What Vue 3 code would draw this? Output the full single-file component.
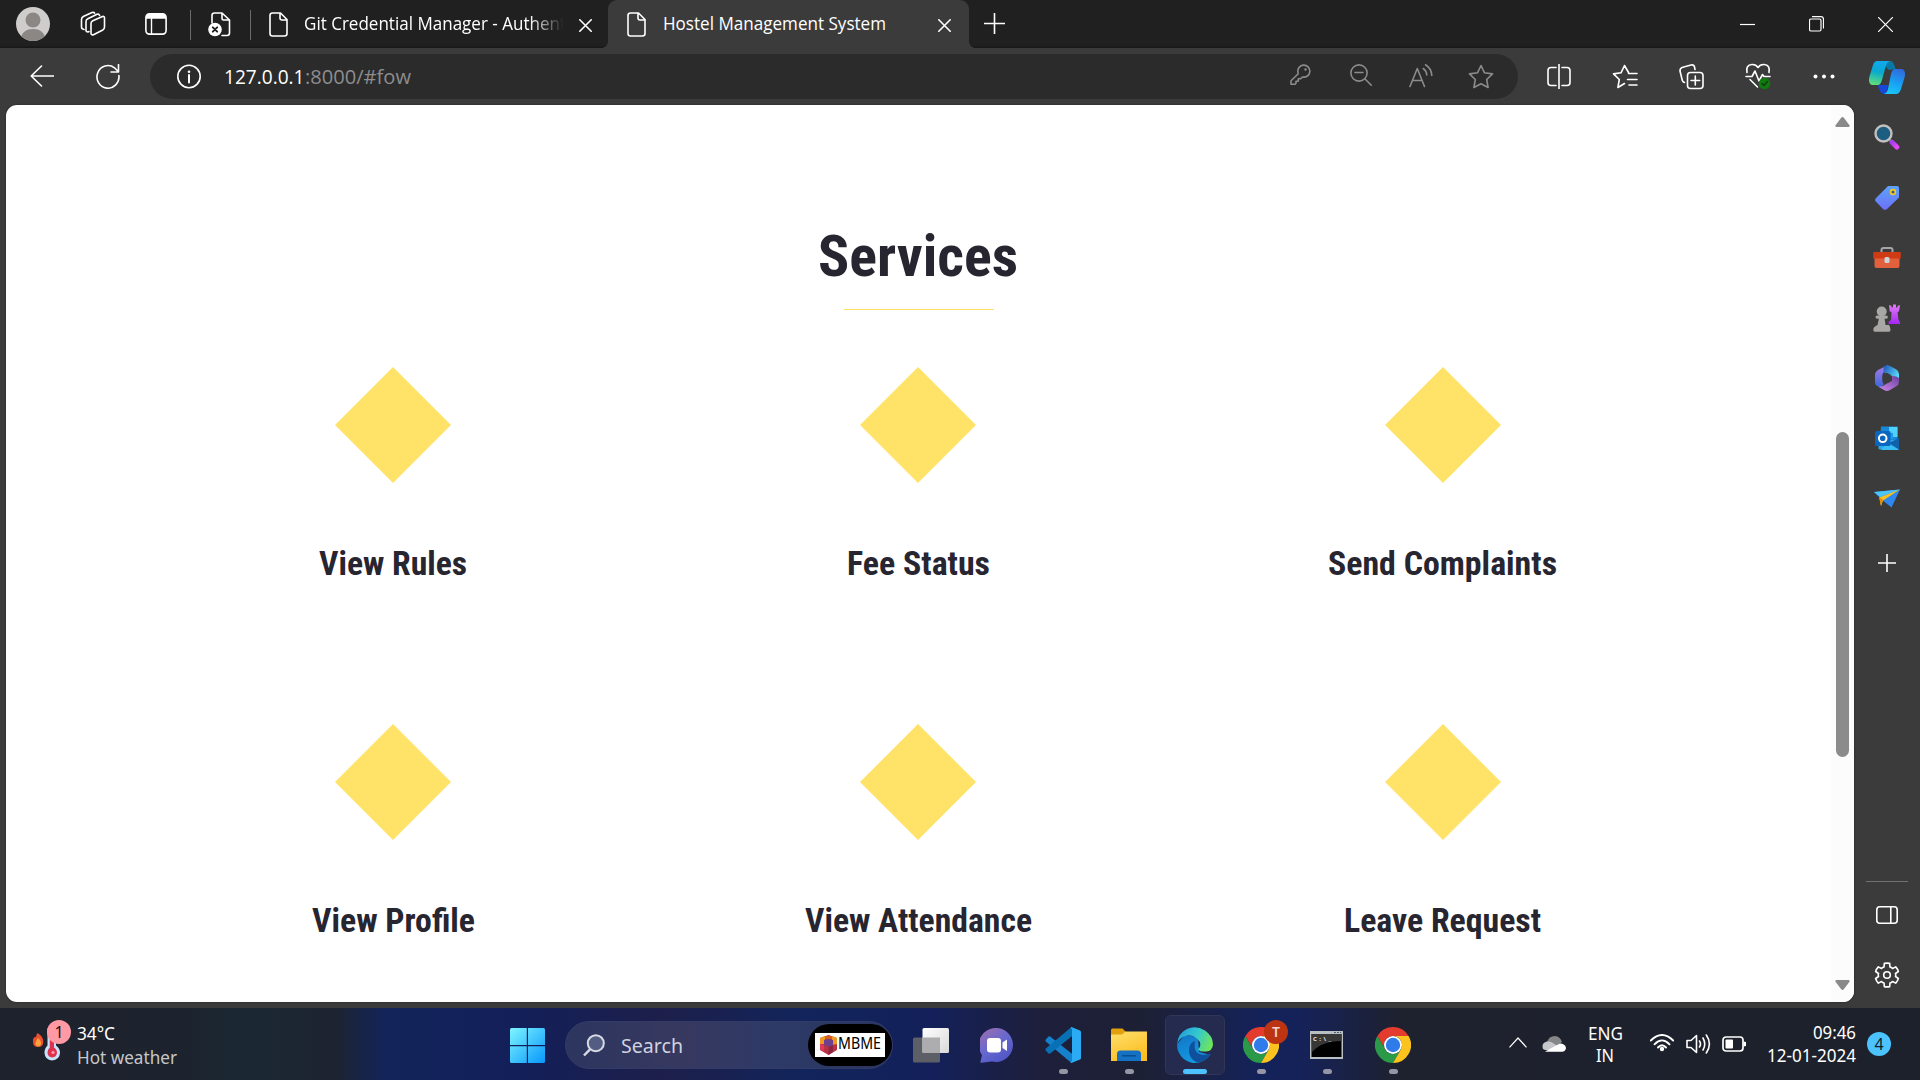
<script setup>
import { h } from 'vue'

// Single line of text set to an exact advance width
const Fit = (p, { slots }) =>
  h('svg', { width: p.w, height: p.h, style: { display: 'block', overflow: 'visible', flex: 'none' } }, [
    h('text', { x: 0, y: p.b, textLength: p.w, lengthAdjust: 'spacingAndGlyphs', fill: 'currentColor' }, slots.default()),
  ])
Fit.props = ['w', 'h', 'b']

const Chrome = () =>
  h('svg', { width: 36, height: 36, viewBox: '0 0 48 48' }, [
    h('path', { d: 'M24 12H44.8A24 24 0 0 0 3.2 12L13.6 30A12 12 0 0 1 24 12Z', fill: '#e33b2e' }),
    h('path', { d: 'M3.2 12A24 24 0 0 0 24 48L34.4 30A12 12 0 0 1 13.6 30Z', fill: '#2a9a48' }),
    h('path', { d: 'M24 48A24 24 0 0 0 44.8 12H24A12 12 0 0 1 34.4 30Z', fill: '#fcc31e' }),
    h('circle', { cx: 24, cy: 24, r: 12, fill: '#fff' }),
    h('circle', { cx: 24, cy: 24, r: 9.6, fill: '#2f7bea' }),
  ])

const services = [
  [{ name: 'View Rules', w: 148 }, { name: 'Fee Status', w: 143 }, { name: 'Send Complaints', w: 229 }],
  [{ name: 'View Profile', w: 163 }, { name: 'View Attendance', w: 227 }, { name: 'Leave Request', w: 197 }],
]

const pt = (r, a) => `${(13 + r * Math.cos((a * Math.PI) / 180)).toFixed(2)} ${(13 + r * Math.sin((a * Math.PI) / 180)).toFixed(2)}`
let gear = ''
for (let k = 0; k < 6; k++) {
  const a = k * 60 - 90
  gear += `${k ? 'L' : 'M'}${pt(8.6, a - 20)} L${pt(11.9, a - 13)} Q${pt(12.2, a)} ${pt(11.9, a + 13)} L${pt(8.6, a + 20)} Q${pt(9, a + 30)} ${pt(8.6, a + 40)}`
}
gear += 'Z'
</script>

<template>
  <div class="screen">
    <header class="tabs">
      <svg class="avatar" width="34" height="34" viewBox="0 0 34 34">
        <defs><clipPath id="av"><circle cx="17" cy="17" r="17" /></clipPath></defs>
        <g clip-path="url(#av)">
          <rect width="34" height="34" fill="#cfcdcb" />
          <circle cx="17" cy="13" r="7.5" fill="#8b8785" />
          <path d="M4.500 34C5 25 10 22 17 22s12 3 12.500 12Z" fill="#8b8785" />
        </g>
      </svg>
      <svg class="ws ln" width="26" height="26" viewBox="0 0 26 26">
        <path d="M11 12.500Q11 10.500 12.800 9.700L22.500 5.500Q24.500 5 24.500 7V16Q24.500 18 22.800 19L13.500 23.700Q11 24.500 11 22Z" />
        <path d="M9 20.500 8 21Q6 21 6 19V10.500Q6 8.500 7.800 7.700L17 3.300Q19 2.500 19.600 4.500M4 18.500Q1.500 18 1.500 16V8.500Q1.500 6.500 3.300 5.500L12 1.500Q14 1 14.600 2.200" />
      </svg>
      <svg class="act" width="22" height="22" viewBox="0 0 22 22">
        <rect x=".9" y=".9" width="20.200" height="20.200" rx="3.500" fill="none" stroke="#fff" stroke-width="1.600" />
        <path d="M1 5V4Q1 1 4 1H18Q21 1 21 4V5.800H1Z" fill="#fff" /><path d="M6.500 5V21" stroke="#fff" stroke-width="1.400" />
      </svg>
      <i class="div d1"></i>
      <svg class="pin ln" width="23" height="25" viewBox="0 0 23 25">
        <path d="M4 11V3.500Q4 1 6.500 1H14L21.500 8V21Q21.500 23.500 19 23.500H14M14 1V6.500Q14 8 15.500 8H21.500" />
        <circle cx="7" cy="17.500" r="6.800" fill="#fff" stroke="none" /><path d="M4.800 15.300 9.200 19.700M9.200 15.300 4.800 19.700" stroke="#202020" stroke-width="1.900" />
      </svg>
      <i class="div d2"></i>
      <div class="tab one">
        <svg class="ln" width="19" height="25" viewBox="0 0 19 25"><path d="M3.500 1H11.500L18 7.500V21.500Q18 24 15.500 24H3.500Q1 24 1 21.500V3.500Q1 1 3.500 1M11 1V6Q11 8 13 8H18" /></svg>
        <Fit class="title faded" :w="262" :h="30" :b="21">Git Credential Manager - Authent</Fit>
        <svg class="ln x" width="13" height="13" viewBox="0 0 13 13"><path d="M.8.800 12.200 12.200M12.200.800.800 12.200" /></svg>
      </div>
      <div class="tab two">
        <svg class="ln" width="19" height="25" viewBox="0 0 19 25"><path d="M3.500 1H11.500L18 7.500V21.500Q18 24 15.500 24H3.500Q1 24 1 21.500V3.500Q1 1 3.500 1M11 1V6Q11 8 13 8H18" /></svg>
        <Fit class="title" :w="223" :h="30" :b="21">Hostel Management System</Fit>
        <svg class="ln x" width="13" height="13" viewBox="0 0 13 13"><path d="M.8.800 12.200 12.200M12.200.800.800 12.200" /></svg>
      </div>
      <svg class="plus ln" width="21" height="21" viewBox="0 0 21 21"><path d="M10.500 0V21M0 10.500H21" /></svg>
      <div class="win">
        <svg class="ln thin" width="15" height="15" viewBox="0 0 15 15"><path d="M0 7.500H15" /></svg>
        <svg class="ln thin" width="15" height="16" viewBox="0 0 15 16"><rect x=".5" y="3" width="11.500" height="12" rx="1.500" /><path d="M3 .6H12Q14.500.600 14.500 3.500V12.500" /></svg>
        <svg class="ln thin" width="15" height="15" viewBox="0 0 15 15"><path d="M0 0 15 15M15 0 0 15" /></svg>
      </div>
    </header>

    <nav class="toolbar">
      <svg class="ln back" width="24" height="22" viewBox="0 0 24 22"><path d="M24 11H1.200M11.500 1 1.200 11 11.500 21" /></svg>
      <svg class="ln reload" width="24" height="25" viewBox="0 0 24 25"><path d="M22.900 11.500A11 11.300 0 1 1 18.500 3.800L22.500 7.800M22.500.500V8H15" /></svg>
      <div class="url">
        <svg class="ln" width="24" height="25" viewBox="0 0 24 25"><circle cx="12" cy="12.500" r="11.200" /><path d="M12 11V18.500" stroke-width="2" /><circle cx="12" cy="7.800" r="1.300" fill="#fff" stroke="none" /></svg>
        <div class="addr">
          <Fit class="host" :w="80.500" :h="30" :b="22">127.0.0.1</Fit><Fit class="path" :w="106" :h="30" :b="22">:8000/#fow</Fit>
        </div>
        <div class="inurl">
          <span><svg class="ln g" width="21" height="21" viewBox="0 0 21 21"><path d="M8 8.500A6 6 0 1 1 12.500 13L10.500 14.800H8.300V17.200H6V19.300L5 20.300H1V16.800L8 10Z" /><circle cx="15.500" cy="5.500" r="1.200" fill="#8b8b8b" stroke="none" /></svg></span>
          <span><svg class="ln g" width="22" height="22" viewBox="0 0 22 22"><circle cx="9" cy="9" r="8.100" /><path d="M5 8.500H13M14.800 14.800 21.300 21.300" /></svg></span>
          <span><svg class="ln g" width="24" height="24" viewBox="0 0 24 24"><path d="M1 22.500 8.300 4.500 15.500 22.500M3.500 16.500H13M14.300 4.500Q17.500 6.800 17.800 11M16.500.800Q22.500 4.500 22.800 11.500" /></svg></span>
          <span><svg class="ln g" width="26" height="25" viewBox="0 0 26 25"><path d="M13 1.500 16.500 8.800 24.500 9.900 18.700 15.500 20.100 23.500 13 19.700 5.900 23.500 7.300 15.500 1.500 9.900 9.500 8.800Z" /></svg></span>
        </div>
      </div>
      <div class="tools">
        <span><svg class="ln" width="24" height="25" viewBox="0 0 24 25"><path d="M12 0V25M9 3.500H4Q1 3.500 1 6.500V18.500Q1 21.500 4 21.500H9M15 3.500H20Q23 3.500 23 6.500V18.500Q23 21.500 20 21.500H15" /></svg></span>
        <span><svg class="ln" width="26" height="25" viewBox="0 0 26 25"><path d="M16.500 8.500 12.500 1.500 9 8.800 1.500 9.900 7.300 15.500 5.900 23.500 12.500 19.500M16.500 9.500H25M15.500 15.500H25M17 21H25" /></svg></span>
        <span><svg class="ln" width="25" height="26" viewBox="0 0 25 26"><rect x="8.500" y="8.500" width="15.500" height="16" rx="3" /><path d="M16.300 12V21M12 16.500H20.700M5.500 18.500 4.500 18Q3.500 17.500 3.200 16L1 7Q.7 4.500 3 3.500L12 1Q15 .5 15.500 3L16 5.500" /></svg></span>
        <span><svg class="ln" width="26" height="27" viewBox="0 0 26 27"><path d="M2 9.500Q.500 2 7 1.500 11 1.300 13 4.500 15 1.300 19 1.500 25.500 2 24 9.500M1 13.500H7L10 8 14 18 17.500 11.500 19 13.500H25M5 16.500 12.500 24" /><circle cx="19.500" cy="20.500" r="5.800" fill="#107c10" stroke="none" /><path d="M17 20.500 19 22.500 22.500 18.500" stroke="#123d12" /></svg></span>
        <span><svg width="22" height="5" viewBox="0 0 22 5" fill="#fff"><circle cx="2.500" cy="2.500" r="2" /><circle cx="11" cy="2.500" r="2" /><circle cx="19.500" cy="2.500" r="2" /></svg></span>
        <span class="cop"><svg width="36" height="33" viewBox="0 0 36 33">
          <defs>
            <linearGradient id="c1" x1=".5" y1="0" x2=".3" y2="1"><stop offset="0" stop-color="#12a8ee" /><stop offset=".45" stop-color="#08a9d0" /><stop offset="1" stop-color="#62df78" /></linearGradient>
            <linearGradient id="c2" x1=".7" y1="0" x2=".4" y2="1"><stop offset="0" stop-color="#3169dd" /><stop offset=".6" stop-color="#17a5f5" /><stop offset="1" stop-color="#19c5f5" /></linearGradient>
          </defs>
          <path d="M18 0H22Q25 1 26.500 8L20 9 15 4Z" fill="#0878a6" /><path d="M9 24H19L17 33H14Q10 31 9 24Z" fill="#1846d8" />
          <path d="M8 0H21Q18 1 16.800 5L13 19Q11.500 24 9 24H3Q-1 23 .3 16L4 4Q5.300 0 8 0Z" fill="url(#c1)" />
          <path d="M25 8H33Q37 9 35.700 16L32 28Q30.500 33 27 33H15Q18 32 19 28L22 13Q23 9 25 8Z" fill="url(#c2)" />
        </svg></span>
      </div>
    </nav>

    <main class="mid">
      <section class="page">
        <div class="content">
          <h1><Fit :w="200" :h="60" :b="56">Services</Fit></h1>
          <hr />
          <div v-for="(row, i) in services" :key="i" class="row">
            <article v-for="s in row" :key="s.name">
              <div class="diamond"></div>
              <h3><Fit :w="s.w" :h="40" :b="32">{{ s.name }}</Fit></h3>
            </article>
          </div>
        </div>
        <div class="scroll">
          <svg width="15" height="10" viewBox="0 0 15 10"><path d="M7.500 0Q8.200 0 9 1L14.800 8.800 14 10H1L.2 8.800 6 1Q6.800 0 7.500 0Z" fill="#898989" /></svg>
          <i></i>
          <svg class="dn" width="15" height="10" viewBox="0 0 15 10"><path d="M7.500 10Q6.800 10 6 9L.2 1.200 1 0H14L14.800 1.200 9 9Q8.200 10 7.500 10Z" fill="#898989" /></svg>
        </div>
      </section>

      <aside class="side">
        <span class="cell"><svg width="26" height="26" viewBox="0 0 26 26">
          <defs><linearGradient id="mg" x1="0" y1="0" x2="1" y2="1"><stop offset="0" stop-color="#a93df0" /><stop offset="1" stop-color="#e748f5" /></linearGradient></defs>
          <path d="M15 15 18 18" stroke="#777" stroke-width="3" /><circle cx="9.500" cy="9.500" r="8" fill="#1c5d80" stroke="#c2c0be" stroke-width="2.400" /><path d="M18.200 18.500 22.800 23" stroke="url(#mg)" stroke-width="5" stroke-linecap="round" />
        </svg></span>
        <span class="cell second"><svg width="24" height="24" viewBox="0 0 24 24">
          <defs><linearGradient id="tg" x1=".5" y1="0" x2=".5" y2="1"><stop offset="0" stop-color="#5ca3fa" /><stop offset="1" stop-color="#6e70f8" /></linearGradient></defs>
          <path d="M13 0H22Q24 0 24 2V11.500L12 23Q10 24.700 8 23L1 15.800Q-.8 14 1 12Z" fill="url(#tg)" /><circle cx="18" cy="6" r="2.400" fill="#455a88" stroke="#f5ce1d" stroke-width="1.600" />
        </svg></span>
        <span class="cell"><svg width="28" height="22" viewBox="0 0 28 22">
          <path d="M8.500 6V3Q8.500 1 10.500 1H17.500Q19.500 1 19.500 3V6" fill="none" stroke="#a4a7aa" stroke-width="2" /><rect x="1.500" y="9" width="25" height="12" rx="2" fill="#e3603c" /><path d="M1 5H27Q27.800 5 27.800 6V11.500H.2V6Q.2 5 1 5Z" fill="#cf3b14" /><rect x="11.500" y="10" width="5" height="6" rx="1.500" fill="#cfd4d6" />
        </svg></span>
        <span class="cell"><svg width="28" height="28" viewBox="0 0 28 28">
          <defs><linearGradient id="rk" x1="0" y1="0" x2="0" y2="1"><stop offset="0" stop-color="#e27df5" /><stop offset="1" stop-color="#a526f2" /></linearGradient></defs>
          <path d="M16 1 18.500 2V3.500H20V.500H23V3.500H24.500V2L27 1 26 7.500 24.500 8 25.500 16 27 18V20H15.500V18L18 16 18.500 8 16.700 7.500Z" fill="url(#rk)" />
          <g fill="#a9a7a5"><circle cx="8.700" cy="7.500" r="5" /><rect x="2.500" y="11.500" width="12.400" height="3.200" rx="1.600" /><path d="M6 14H11.500L12.500 21H16Q17.500 23 17.500 26 17.500 27.800 16 27.800H2Q.3 27.800.3 26 .3 23 2 22.500L4.500 21Z" /></g>
        </svg></span>
        <span class="cell"><svg width="24" height="26" viewBox="0 0 24 26">
          <defs><linearGradient id="m1" x1="0" y1="0" x2="0" y2="1"><stop offset="0" stop-color="#b07bea" /><stop offset="1" stop-color="#3967d8" /></linearGradient>
            <linearGradient id="m2" x1="0" y1="0" x2="1" y2=".6"><stop offset="0" stop-color="#204fb8" /><stop offset="1" stop-color="#58dcf7" /></linearGradient>
            <linearGradient id="m3" x1="0" y1="1" x2="1" y2="0"><stop offset="0" stop-color="#d08aef" /><stop offset="1" stop-color="#6b3f9c" /></linearGradient></defs>
          <path d="M13 0 4 4.500Q0 6.500 0 10V17Q0 20 3 21.500L5 22.500 9 19.500 7.500 17V9.500Q7.500 8 9 7Z" fill="url(#m1)" /><path d="M9 1Q12-.500 15 .9L21 4.300Q24 6 24 9V16L17 11.500 11 8.500Q8 8 8.500 5Z" fill="url(#m2)" /><path d="M24 13V17Q24 20 21 21.600L15 25Q12 26.800 9 25L3.500 21.700Q8 22 11 19L17 15.800V11Q22 11 24 13Z" fill="url(#m3)" />
          <path d="M12 8.300 16 10.600V15.400L12 17.700 8 15.400V10.600Z" fill="#3b3b3b" stroke="#3b3b3b" stroke-linejoin="round" />
        </svg></span>
        <span class="cell"><svg width="24" height="24" viewBox="0 0 24 24">
          <path d="M6 .5H22.500V15H5Z" fill="#1688d8" /><path d="M14 1H22.500V11H14Z" fill="#4ed1fa" /><path d="M14 7H18V13H14Z" fill="#1a9be8" /><path d="M3.500 14H24V23.500H5Q3.500 23.500 3.500 22Z" fill="#2aa9ea" /><path d="M24 12V23.500L14 17Z" fill="#1160a8" /><path d="M12 17 24 24H6Z" fill="#38bdf4" /><rect y="5" width="15.500" height="15" rx="1.500" fill="#0b66c2" /><circle cx="7.700" cy="12.300" r="3.800" fill="none" stroke="#fff" stroke-width="2" />
        </svg></span>
        <span class="cell"><svg width="26" height="19" viewBox="0 0 26 19">
          <path d="M0 3 26 .5 17.500 18.500 7 10Z" fill="#2f87ef" /><path d="M0 3 26 .5 6 8Z" fill="#4cc4f7" /><path d="M26 .500 5.200 8.500 7 17 9 11.500Z" fill="#f8c21c" /><path d="M5.200 8.500 7 17 9 10.500Z" fill="#e68b0d" />
        </svg></span>
        <svg class="ln add" width="18" height="18" viewBox="0 0 18 18"><path d="M9 0V18M0 9H18" /></svg>
        <i class="rule"></i>
        <svg class="ln panel" width="22" height="18" viewBox="0 0 22 18"><rect x=".8" y=".8" width="20.400" height="16.400" rx="3" /><path d="M14.800 1V17" /></svg>
        <svg class="ln gear" width="26" height="26" viewBox="0 0 26 26"><path :d="gear" /><circle cx="13" cy="13" r="3.300" /></svg>
      </aside>
    </main>

    <footer class="taskbar">
      <div class="weather">
        <svg width="34" height="34" viewBox="0 0 34 34">
          <path d="M4.500 6Q10 9 10.300 14.500 10.300 20 5 20 0 20 0 14.500 0 11 2 9.500L3 10.500Q3 8 4.500 6Z" fill="#ee5034" /><path d="M5 11Q8.500 14 8 17 7.300 19.500 5 19.500 2.200 19 2.500 16Q3 13 5 11Z" fill="#fba43b" />
          <path d="M14.500 1H23V18.500Q27 21 27 26 26.500 33 19 33.500 12 33 11.500 26 11.500 21 14.500 18.500Z" fill="#c7e2fa" /><path d="M16.800 4H21V20.500Q24 22.500 24 26 23.500 30 19.200 30.500 15 30 14.500 26 14.500 22.500 16.800 20.500Z" fill="#e0304f" /><circle cx="20" cy="25.500" r="1.600" fill="#ffa0aa" />
        </svg>
        <b class="badge pink">1</b>
        <div class="wt"><Fit :w="38" :h="24" :b="20">34°C</Fit><Fit class="dim" :w="100" :h="24" :b="20">Hot weather</Fit></div>
      </div>
      <svg class="start" width="35" height="35" viewBox="0 0 35 35">
        <defs><linearGradient id="st" gradientUnits="userSpaceOnUse" x1="0" y1="0" x2="35" y2="35"><stop offset="0" stop-color="#7df5ff" /><stop offset="1" stop-color="#0797fb" /></linearGradient></defs>
        <g fill="url(#st)"><path d="M1.500 0H16.800V16.900H0V1.500Q0 0 1.500 0Z" /><path d="M18 0H33.500Q35 0 35 1.500V16.900H18Z" /><path d="M0 18.300H16.800V35H1.500Q0 35 0 33.500Z" /><path d="M18 18.300H35V33.500Q35 35 33.500 35H18Z" /></g>
      </svg>
      <div class="search">
        <svg width="22" height="23" viewBox="0 0 22 23" fill="none" stroke="#d8dae4" stroke-width="2"><circle cx="12.800" cy="9.200" r="8" fill="#535d82" /><path d="M7 15.300 1 21.500" stroke-width="2.500" /></svg>
        <Fit class="st" :w="62" :h="30" :b="22.500">Search</Fit>
        <div class="pill"><div class="mb">
          <svg width="19" height="20" viewBox="0 0 19 20"><path d="M1 3 9.500 0 18 3V15L9.500 20 1 15Z" fill="#b93243" /><path d="M1 3 6 1V9H1ZM13 1 18 3V9L13 10Z" fill="#f09a25" /><path d="M6 1H13V4L9.500 5 6 4Z" fill="#d66020" /><path d="M5 5 9.500 4 14 5V10L9.500 12 5 10Z" fill="#71408c" /><path d="M9.500 12 14 10V17L9.500 20Z" fill="#8c2640" /><path d="M1 9 5 10V16.500L1 14Z" fill="#e1395a" /></svg>
          <Fit :w="43" :h="20" :b="13.800">MBME</Fit>
        </div></div>
      </div>
      <div class="apps">
        <span><svg width="36" height="35" viewBox="0 0 36 35"><defs><linearGradient id="tv" x1="0" y1="0" x2="1" y2="1"><stop offset="0" stop-color="#fff" /><stop offset="1" stop-color="#d8d8d8" /></linearGradient></defs><rect y="9.500" width="27" height="25" rx="1.500" fill="#5d5f66" /><rect x="9.500" width="26.500" height="25" rx="1.500" fill="url(#tv)" /><path d="M9.500 9.500H27V25H9.500Z" fill="#adadb0" /></svg></span>
        <span><svg width="34" height="35" viewBox="0 0 34 35"><defs><linearGradient id="ch" x1="0" y1="0" x2=".7" y2="1"><stop offset="0" stop-color="#a36faa" /><stop offset=".55" stop-color="#6668cf" /><stop offset="1" stop-color="#4f55c6" /></linearGradient></defs><path d="M17 0A17 17 0 1 1 12 33.500L1 34.800Q0 34.500.5 33.500L2 27A17 17 0 0 1 17 0Z" fill="url(#ch)" /><rect x="7" y="10" width="14" height="14.500" rx="3" fill="#fff" /><path d="M22.500 14.500 27 11.500V23L22.500 20Z" fill="#fff" /></svg></span>
        <span class="run"><svg width="36" height="36" viewBox="0 0 36 36"><path d="M.8 12.500 3.500 9.500Q4.500 9 5.500 9.800L31 30 26.500 36 .8 14.500Q0 13.500.8 12.500Z" fill="#1581cc" /><path d="M.8 23.500 3.500 26.500Q4.500 27 5.500 26.200L31 6 26.500 0 .8 21.500Q0 22.500.8 23.500Z" fill="#0870b4" /><path d="M26.500 0 35 3.500Q36 4 36 5V31Q36 32 35 32.500L26.500 36Q25.500 36 25.500 35 27 35 27 33V3Q27 1 25.500 1Z" fill="#2aabf3" /></svg></span>
        <span class="run"><svg width="36" height="34" viewBox="0 0 36 34"><defs><linearGradient id="fo" x1="0" y1="0" x2=".5" y2="1"><stop offset="0" stop-color="#ffe06c" /><stop offset="1" stop-color="#fbbf24" /></linearGradient></defs><path d="M0 2Q0 .5 1.500.500H11.500L15 4V8H0Z" fill="#e1a00c" /><path d="M0 6.500H11L14.500 3.500H36V33H0Z" fill="url(#fo)" /><path d="M6 33V26Q6 22.500 9.500 22.500H26.500Q30 22.500 30 26V33Z" fill="#1471c3" /><path d="M11 27.800H25" stroke="#0b4d91" stroke-width="1.500" /></svg></span>
        <span class="run on"><svg width="36" height="36" viewBox="0 0 36 36">
          <defs><linearGradient id="e1" x1="0" y1=".3" x2="1" y2=".6"><stop offset="0" stop-color="#249fd8" /><stop offset=".5" stop-color="#32c7d0" /><stop offset="1" stop-color="#70e658" /></linearGradient>
            <linearGradient id="e2" x1="0" y1="0" x2=".5" y2="1"><stop offset="0" stop-color="#1274c5" /><stop offset="1" stop-color="#139be2" /></linearGradient></defs>
          <path d="M.1 17A18 18 0 0 0 22 35.500Q29 33.500 33 28L22 25 21 10 8 8Z" fill="url(#e2)" />
          <path d="M12 22Q11 31 20 35.500 28 35 33.500 27.500 34 26 32.500 26.500 27 29 21.500 26.500 16 23.500 18 14Q13 15 12 22Z" fill="#104f9c" />
          <path d="M.1 17Q1 6 10.500 1.800 19-2 28 3.500 36 9 36 17.500 35.500 24 29 24.500 23 25 21.500 23 21 22 22.500 20.500 25 16 20 11.500 13 6 6 10 1.500 12.500.1 17Z" fill="url(#e1)" />
        </svg></span>
        <span class="run"><Chrome /><b class="badge red">T</b></span>
        <span class="run"><svg class="cmd" width="33" height="28" viewBox="0 0 33 28"><rect width="33" height="28" fill="#b8bec2" /><path d="M24 1.500H31" stroke="#4b6172" stroke-dasharray="2 1" /><rect x="1.500" y="3" width="30" height="23" fill="#000" /><path d="M1.500 3H31.500V10Q12 10 2 21Z" fill="#373737" /><text x="3" y="10" font-size="6" font-weight="bold" fill="#e8e8e8" textLength="18">C:\_</text></svg></span>
        <span class="run"><Chrome /></span>
      </div>
      <div class="tray">
        <svg class="ln thin up" width="18" height="11" viewBox="0 0 18 11"><path d="M.5 10.300 9 1 17.500 10.300" /></svg>
        <svg class="cloud" width="24" height="16" viewBox="0 0 24 16"><path d="M5 6Q7 0 13 0 18 .5 20 6L12 12Z" fill="#868789" /><path d="M1 13Q-1 7 5 5.500 8 5 10 6.500L22 14H3Z" fill="#c7c8ca" /><path d="M3 15.500 16 8.500Q18 7 21 8 24 9.300 24 12 23.500 15.500 20 15.700H5Z" fill="#fff" /></svg>
        <div class="lang"><Fit :w="35" :h="23" :b="18.500">ENG</Fit><Fit :w="18" :h="23" :b="18">IN</Fit></div>
        <svg class="ln wifi" width="24" height="18" viewBox="0 0 24 18"><path d="M.8 6.500Q12-4.500 23.200 6.500M4.500 10.300Q12 2.500 19.500 10.300M8 13.500Q12 9 16 13.500" stroke-width="1.900" /><circle cx="12" cy="15" r="2.200" fill="#fff" stroke="none" /></svg>
        <svg class="ln spk" width="25" height="20" viewBox="0 0 25 20"><path d="M1 6.500H5L10.500 1.500V18.500L5 13.500H1ZM13.500 7Q15.500 10 13.500 13M17 4Q20.500 10 17 16M20.300 1Q26.500 10 20.300 19" /></svg>
        <svg class="bat" width="24" height="16" viewBox="0 0 24 16"><rect x="1" y="1" width="20" height="14" rx="3" fill="none" stroke="#fff" stroke-width="1.700" /><rect x="3.500" y="3.500" width="7.500" height="9" rx=".8" fill="#fff" /><path d="M21.500 5.500 24 6V10L21.500 10.500Z" fill="#fff" /></svg>
        <div class="clock"><Fit :w="43" :h="23" :b="17.500">09:46</Fit><Fit :w="89" :h="23" :b="17.500">12-01-2024</Fit></div>
        <b class="count">4</b>
      </div>
    </footer>
  </div>
</template>

<style>
body { margin: 0; background: #3b3b3b; overflow: hidden; }
</style>

<style scoped>
.screen { width: 1920px; height: 1080px; display: flex; flex-direction: column; overflow: hidden; background: #3b3b3b; color: #fff; font-family: "Open Sans", "Noto Sans", sans-serif; }
svg { display: block; flex: none; }
.ln { fill: none; stroke: #fff; stroke-width: 1.6; stroke-linecap: round; stroke-linejoin: round; }
.thin { stroke-width: 1.2; stroke-linecap: butt; }
.g { stroke: #8b8b8b; }

.tabs { height: 48px; display: flex; align-items: center; background: #202020; box-shadow: inset 0 -2px 2px -1px #161616; }
.avatar { margin-left: 16px; }
.ws { margin-left: 30px; }
.act { margin-left: 39px; }
.div { width: 1px; height: 30px; background: #6b6b6b; margin-top: 2px; flex: none; }
.d1 { margin-left: 23px; }
.pin { margin-left: 17px; }
.d2 { margin-left: 19px; }
.tab { display: flex; align-items: center; height: 48px; box-sizing: border-box; font-size: 18px; flex: none; }
.one { width: 357px; padding-left: 18px; }
.title { margin-left: 16px; }
.faded { -webkit-mask: linear-gradient(90deg, #000 86%, transparent 99%); mask: linear-gradient(90deg, #000 86%, transparent 99%); }
.one .x { margin: 2px 0 0 13px; }
.two { width: 361px; padding-left: 19px; background: #3b3b3b; border-radius: 9px 9px 0 0; position: relative; }
.two::before, .two::after { content: ""; position: absolute; bottom: 0; width: 6px; height: 6px; }
.two::before { left: -6px; background: radial-gradient(circle at 0 0, transparent 5.5px, #3b3b3b 6px); }
.two::after { right: -6px; background: radial-gradient(circle at 100% 0, transparent 5.5px, #3b3b3b 6px); }
.two .title { margin-left: 17px; }
.two .x { margin: 2px 0 0 52px; }
.plus { margin-left: 15px; margin-top: -1px; }
.win { margin-left: auto; padding-right: 27px; display: flex; gap: 54px; align-items: center; }

.toolbar { height: 57px; display: flex; align-items: center; }
.back { margin-left: 30px; margin-top: -1px; }
.reload { margin-left: 42px; }
.url { margin-left: 30px; width: 1368px; height: 45px; border-radius: 23px; background: #2b2b2b; box-sizing: border-box; padding: 0 7.5px 0 27px; display: flex; align-items: center; }
.addr { display: flex; margin-left: 23px; font-size: 20.5px; }
.path { color: #8d8d8d; }
.inurl { display: flex; margin-left: auto; }
.inurl span { width: 60px; display: flex; justify-content: center; }
.tools { display: flex; align-items: center; margin-left: 8px; }
.tools span { width: 66.3px; display: flex; justify-content: center; }
.tools .cop { width: 59px; padding-top: 1px; }

.mid { height: 903px; display: flex; }
.page { margin-left: 6px; width: 1848px; height: 897px; border-radius: 11px; overflow: hidden; background: #fff; display: flex; box-shadow: 0 0 2px #222; }
.content { width: 1824px; margin-right: 1px; display: flex; flex-direction: column; align-items: center; color: #272530; font-family: "Roboto Condensed", Roboto, sans-serif; font-stretch: 75%; }
h1 { margin: 115px 0 0; font-size: 58px; font-weight: 700; }
hr { width: 150px; height: 1px; border: 0; margin: 29px 0 0 2px; background: #ffe369; flex: none; }
.row { display: flex; height: 357px; width: 1574px; flex: none; }
.row article { flex: 1; display: flex; flex-direction: column; align-items: center; }
.diamond { width: 82px; height: 82px; margin-top: 74px; background: #ffe369; transform: rotate(45deg); flex: none; }
h3 { margin: 77px 0 0; font-size: 33.5px; font-weight: 700; }
.scroll { width: 23px; background: #fcfcfc; display: flex; flex-direction: column; align-items: center; padding-top: 12px; box-sizing: border-box; }
.scroll i { width: 13px; height: 325px; border-radius: 7px; background: #8b8b8b; margin-top: 305px; }
.dn { margin-top: 223px; }

.side { width: 66px; display: flex; flex-direction: column; align-items: center; }
.cell { height: 60px; display: flex; align-items: center; flex: none; }
.cell:first-child { margin-top: 1.5px; }
.second { margin-top: 1.5px; }
.add { margin: 26px 1px 0 0; }
.rule { width: 42px; height: 1px; background: #717171; margin-top: 309px; }
.panel { margin-top: 24px; }
.gear { margin-top: 38px; }

.taskbar { height: 72px; display: flex; align-items: center; font-family: "Noto Sans", "Open Sans", sans-serif; background: linear-gradient(90deg, #1e222d 0, #1d232e 180px, #1a2833 250px, #1d2330 335px, #12245a 385px, #131f59 520px, #1d1f4a 660px, #12245b 800px, #13205a 930px, #1e1f3b 1040px, #1d2034 1140px, #14225a 1260px, #15225a 1300px, #1e212e 1400px, #1c212b 100%); }
.weather { display: flex; position: relative; margin-left: 33px; width: 150px; font-size: 18px; align-items: center; }
.badge { position: absolute; width: 24px; height: 24px; border-radius: 50%; text-align: center; line-height: 24px; font-weight: 400; font-size: 16px; }
.pink { left: 14px; top: 0; background: #ff99a4; color: #161616; }
.wt { margin-left: 9.5px; }
.dim { color: #c5c7ca; }
.start { margin-left: 327px; margin-top: 3px; }
.search { margin-left: 20px; margin-top: 2px; width: 328px; height: 48px; border-radius: 24px; box-sizing: border-box; border: 1px solid #333b68; background: linear-gradient(90deg, #2c365f, #37385f 35%, #2d3a67 65%, #29355f); display: flex; align-items: center; padding-left: 17px; }
.st { margin-left: 16px; font-size: 19px; color: #cfd2df; }
.pill { margin-left: 125px; width: 84px; height: 42px; border-radius: 21px; background: #000; display: flex; align-items: center; justify-content: center; flex: none; }
.mb { width: 70px; height: 24px; background: #fff; color: #000; display: flex; align-items: center; padding-left: 4px; box-sizing: border-box; font-size: 16.5px; -webkit-text-stroke: .3px #000; }
.apps { display: flex; margin-left: 5px; margin-top: 2px; }
.apps span { width: 60px; height: 60px; margin: 0 3px; box-sizing: border-box; border-radius: 6px; display: flex; align-items: center; justify-content: center; position: relative; flex: none; }
.apps .run::after { content: ""; position: absolute; left: 25.5px; bottom: 1px; width: 9px; height: 5px; border-radius: 2.5px; background: #9496a4; }
.apps .on { background: #252b4f; border: 1px solid #303653; }
.apps .on::after { left: 17px; bottom: 0; width: 24px; background: #4cc2ff; }
.cmd { margin: -1px 2px 0 0; }
.red { left: 33px; top: 5px; background: #bd3412; color: #f1d5cd; font-size: 14px; font-weight: 600; }
.tray { display: flex; align-items: center; margin-left: auto; width: 411px; flex: none; font-size: 18px; }
.up { margin-top: -3px; }
.cloud { margin-left: 15px; }
.lang { margin-left: 21.5px; display: flex; flex-direction: column; align-items: center; }
.wifi { margin-left: 27.5px; margin-top: -3px; }
.spk { margin-left: 12px; }
.bat { margin-left: 11px; }
.clock { margin-left: 20.5px; display: flex; flex-direction: column; align-items: flex-end; }
.count { margin-left: 11.5px; width: 24px; height: 24px; border-radius: 50%; background: #4cc2ff; color: #10202b; text-align: center; line-height: 24px; font-weight: 400; font-size: 16px; }
</style>
